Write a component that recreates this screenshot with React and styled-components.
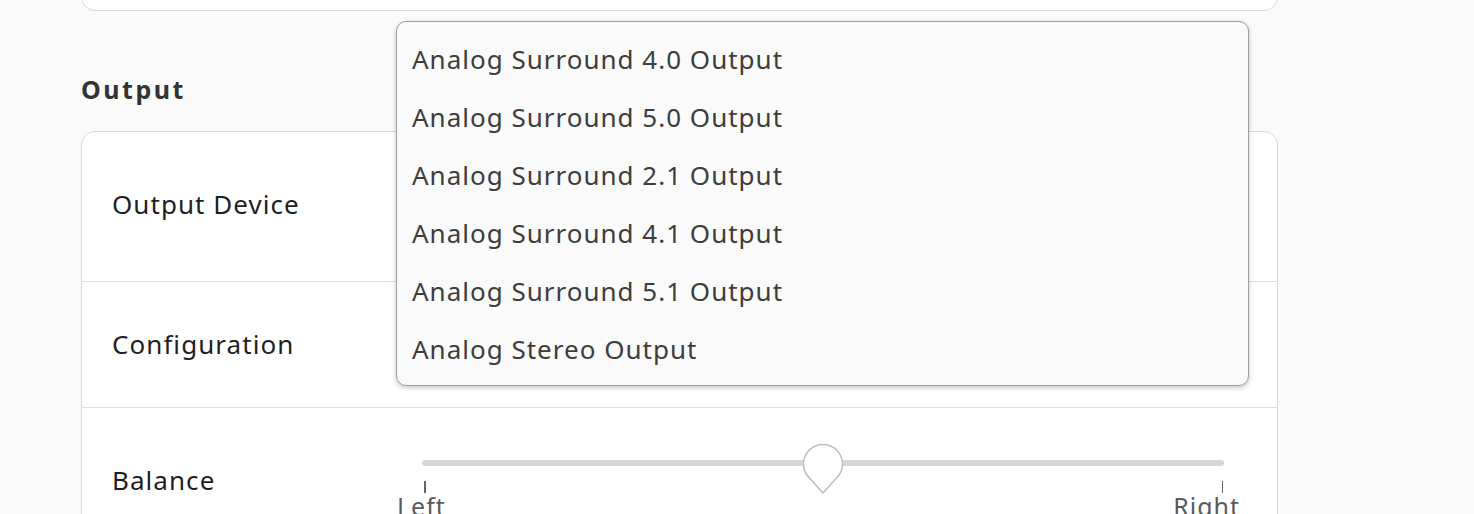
import React from 'react';
import styled, { createGlobalStyle } from 'styled-components';

const GlobalStyle = createGlobalStyle`
  html, body {
    margin: 0;
    height: 100%;
    overflow: hidden;
    background: #fafafa;
    font-family: 'Noto Sans', 'Open Sans', sans-serif;
  }
`;

const Page = styled.div`
  position: relative;
  display: flex;
  flex-direction: column;
  width: 1197px;
  padding-left: 81px;
`;

const Card = styled.div`
  background: #fff;
  border: 1px solid #dadada;
  border-radius: 14px;
`;

const TopCard = styled(Card)`
  height: 60px;
  margin-top: -51px;
`;

const Heading = styled.h2`
  margin: 65px 0 29px;
  font-size: 25px;
  line-height: 26px;
  letter-spacing: 2.5px;
  font-weight: 700;
  color: #333;
`;

const Row = styled.div`
  display: flex;
  align-items: ${(p) => (p.$top ? 'flex-start' : 'center')};
  height: ${(p) => p.$height}px;
  padding: ${(p) => (p.$top ? `${p.$top}px 30px 0` : `0 30px ${p.$lift || 0}px`)};
  box-sizing: border-box;
  border-top: ${(p) => (p.$first ? 'none' : '1px solid #dedede')};
`;

const Label = styled.span`
  width: 310px;
  flex-shrink: 0;
  font-size: 26px;
  line-height: 26px;
  letter-spacing: 1.05px;
  color: #1f1f1f;
`;

const Slider = styled.div`
  position: relative;
  width: 802px;
  height: 110px;
  margin-top: -23px;
`;

const Track = styled.div`
  margin-top: 16px;
  height: 6px;
  border-radius: 3px;
  background: #d6d6d6;
`;

const Knob = styled.svg`
  position: absolute;
  top: 0;
  left: calc(50% - 21px);
`;

const Tick = styled.div`
  position: absolute;
  top: 37px;
  width: 1.5px;
  height: 12px;
  background: #666;
  ${(p) => (p.$side === 'left' ? 'left: 2px;' : 'right: 1px;')}
`;

const Mark = styled.span`
  position: absolute;
  top: 49px;
  font-size: 25px;
  line-height: 26px;
  letter-spacing: 1px;
  color: #5a5a5a;
  ${(p) => (p.$side === 'left' ? 'left: -25px;' : 'right: -16px;')}
`;

const Popover = styled.div`
  position: absolute;
  top: 21px;
  left: 396px;
  width: 853px;
  height: 365px;
  box-sizing: border-box;
  padding-top: 8px;
  background: #fafafa;
  border: 1px solid #9e9e9e;
  border-radius: 10px;
  box-shadow: 0 2px 5px rgba(0, 0, 0, 0.22);
`;

const Item = styled.div`
  height: 58px;
  line-height: 58px;
  padding-left: 15px;
  font-size: 26px;
  letter-spacing: 1px;
  color: #3d3d3d;
`;

const outputs = [
  'Analog Surround 4.0 Output',
  'Analog Surround 5.0 Output',
  'Analog Surround 2.1 Output',
  'Analog Surround 4.1 Output',
  'Analog Surround 5.1 Output',
  'Analog Stereo Output',
];

const App = () => {
  return (
    <>
      <GlobalStyle />
      <Page>
        <TopCard />
        <Heading>Output</Heading>
        <Card>
          <Row $first $height={149} $lift={5}>
            <Label>Output Device</Label>
          </Row>
          <Row $height={126} $lift={1}>
            <Label>Configuration</Label>
          </Row>
          <Row $height={160} $top={59}>
            <Label>Balance</Label>
            <Slider>
              <Track />
              <Knob width="42" height="52" viewBox="0 0 42 52">
                <path
                  d="M21 49 L8.2 34.7 A19.5 19.5 0 1 1 33.8 34.7 Z"
                  fill="#fff"
                  stroke="#bdbdbd"
                  strokeWidth="1.5"
                  strokeLinejoin="round"
                />
              </Knob>
              <Tick $side="left" />
              <Tick $side="right" />
              <Mark $side="left">Left</Mark>
              <Mark $side="right">Right</Mark>
            </Slider>
          </Row>
        </Card>
        <Popover>
          {outputs.map((name) => (
            <Item key={name}>{name}</Item>
          ))}
        </Popover>
      </Page>
    </>
  );
};

export default App;
